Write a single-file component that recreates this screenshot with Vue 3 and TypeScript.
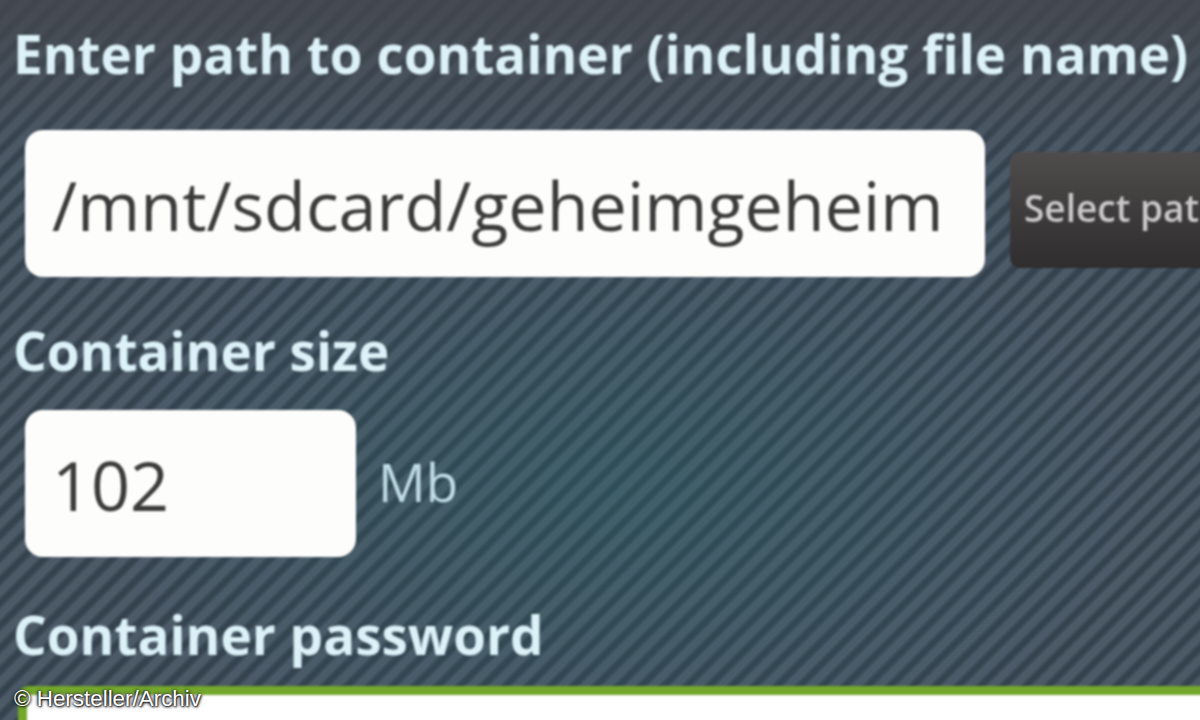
<script setup lang="ts">
const credit: string = '© Hersteller/Archiv'
</script>

<template>
  <div class="screen">
    <div class="form">
      <div class="label first">Enter path to container (including file name)</div>
      <div class="row path-row">
        <div class="field path-field">/mnt/sdcard/geheimgeheim</div>
        <div class="select-btn">Select pat</div>
      </div>
      <div class="label size-label">Container size</div>
      <div class="row size-row">
        <div class="field size-field">102</div>
        <div class="unit">Mb</div>
      </div>
      <div class="label pass-label">Container password</div>
      <div class="pass-field"></div>
    </div>
    <div class="credit">{{ credit }}</div>
  </div>
</template>

<style scoped>
.screen {
  position: relative;
  width: 1200px;
  height: 720px;
  overflow: hidden;
  background-color: #414f5a;
  background-image:
    linear-gradient(180deg, rgba(68, 70, 76, 0.85) 0px, rgba(68, 72, 78, 0.5) 70px, rgba(68, 72, 78, 0) 170px),
    radial-gradient(ellipse 520px 300px at 620px 490px, rgba(28, 112, 112, 0.26), rgba(28, 112, 112, 0)),
    repeating-linear-gradient(
      135deg,
      #4c5a68 0px,
      #4c5a68 5px,
      #35434f 9px,
      #35434f 12px,
      #4c5a68 16px
    );
  font-family: "Open Sans", "Noto Sans", sans-serif;
}
.form {
  display: flex;
  flex-direction: column;
  width: 1400px;
  padding-left: 13px;
  filter: blur(1.3px);
}
.label {
  color: #dcf2f8;
  font-weight: 700;
  font-size: 53px;
  line-height: 60px;
  white-space: nowrap;
}
.first { margin-top: 24px; }
.row {
  display: flex;
  align-items: center;
  padding-left: 12px;
}
.path-row { margin-top: 46px; }
.field {
  box-sizing: border-box;
  height: 147px;
  background: #fdfdfb;
  border-radius: 18px;
  color: #3b3b3b;
  font-size: 68.3px;
  line-height: 150px;
  padding-left: 27px;
  white-space: nowrap;
}
.path-field { width: 960px; }
.select-btn {
  box-sizing: border-box;
  width: 300px;
  height: 116px;
  margin-left: 25px;
  margin-top: 12px;
  padding-left: 14px;
  border-radius: 10px;
  background: linear-gradient(#4f4c4c, #393637 70%, #2f2d2e);
  color: #c9c9c9;
  font-size: 37px;
  font-weight: 600;
  line-height: 112px;
  white-space: nowrap;
}
.size-label { margin-top: 44px; }
.size-row { margin-top: 29px; }
.size-field { width: 331px; }
.unit {
  margin-left: 22px;
  color: #bfdbe4;
  font-size: 53px;
  margin-top: -4px;
}
.pass-label { margin-top: 48px; }
.pass-field {
  box-sizing: border-box;
  width: 1300px;
  height: 120px;
  margin-top: 21px;
  margin-left: 5px;
  background: #fff;
  border: 9px solid #74a82c;
  border-radius: 10px 0 0 0;
}
.credit {
  position: absolute;
  left: 14px;
  bottom: 9px;
  color: #fff;
  font-family: "Liberation Sans", Arial, sans-serif;
  font-size: 22.4px;
  line-height: 24px;
  text-shadow: 1px 1px 2px #111, -1px 0 2px #222, 0 0 4px #333;
}
</style>

<style>
body { margin: 0; background: #414f5a; }
</style>
